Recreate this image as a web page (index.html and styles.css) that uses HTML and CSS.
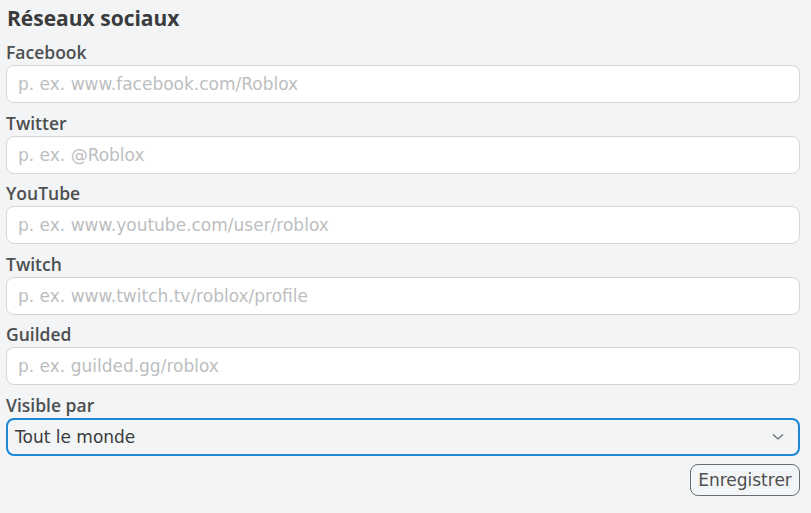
FILE: index.html
```html
<!DOCTYPE html>
<html lang="fr">
<head>
<meta charset="utf-8">
<link rel="stylesheet" href="styles.css">
</head>
<body>
<section class="social">
  <h2 class="title">Réseaux sociaux</h2>
  <div class="field">
    <label class="label">Facebook</label>
    <input class="input" type="text" placeholder="p. ex. www.facebook.com/Roblox">
  </div>
  <div class="field">
    <label class="label">Twitter</label>
    <input class="input" type="text" placeholder="p. ex. @Roblox">
  </div>
  <div class="field">
    <label class="label">YouTube</label>
    <input class="input" type="text" placeholder="p. ex. www.youtube.com/user/roblox">
  </div>
  <div class="field">
    <label class="label">Twitch</label>
    <input class="input" type="text" placeholder="p. ex. www.twitch.tv/roblox/profile">
  </div>
  <div class="field">
    <label class="label">Guilded</label>
    <input class="input" type="text" placeholder="p. ex. guilded.gg/roblox">
  </div>
  <div class="field">
    <label class="label">Visible par</label>
    <div class="select">
      <span class="select-text">Tout le monde</span>
      <svg class="chevron" width="12" height="8" viewBox="0 0 12 8"><path d="M1 1.5 L6 6 L11 1.5" fill="none" stroke="#6b6e70" stroke-width="1.3"/></svg>
    </div>
  </div>
  <div class="actions">
    <button class="btn">Enregistrer</button>
  </div>
</section>
</body>
</html>
```
FILE: styles.css
```css
html, body {
  margin: 0;
  padding: 0;
  background: #f2f4f5;
}
body {
  font-family: "DejaVu Sans", sans-serif;
  color: #393b3d;
}
.social {
  padding: 6px 11px 0 6px;
}
.title {
  margin: 0 0 11px 1px;
  font-family: "Open Sans", sans-serif;
  font-size: 21px;
  line-height: 24px;
  font-weight: 700;
  color: #393b3d;
}
.field {
  display: flex;
  flex-direction: column;
  margin-bottom: 8.5px;
}
.label {
  font-family: "Open Sans", sans-serif;
  font-size: 17.5px;
  line-height: 22px;
  font-weight: 600;
  margin: 0 0 2px 0;
  color: #4d4f51;
}
.input {
  box-sizing: border-box;
  height: 38px;
  width: 100%;
  border: 1px solid #d3d5d7;
  border-radius: 8px;
  background: #fff;
  padding: 0 11px;
  font-family: "DejaVu Sans", sans-serif;
  font-size: 17px;
  color: #393b3d;
  outline: none;
}
.input::placeholder {
  color: #bcbebf;
}
.select {
  box-sizing: border-box;
  height: 38px;
  border: 2px solid #1b87d6;
  border-radius: 8px;
  display: flex;
  align-items: center;
  justify-content: space-between;
  padding: 0 14px 0 7px;
  font-size: 17px;
  color: #393b3d;
}
.chevron {
  display: block;
}
.actions {
  display: flex;
  justify-content: flex-end;
  margin-top: 2px;
}
.btn {
  box-sizing: border-box;
  height: 32px;
  width: 110px;
  border: 1px solid #6b6e70;
  border-radius: 8px;
  background: transparent;
  font-family: "DejaVu Sans", sans-serif;
  font-size: 17px;
  color: #4d4f51;
  padding: 0;
}
```
